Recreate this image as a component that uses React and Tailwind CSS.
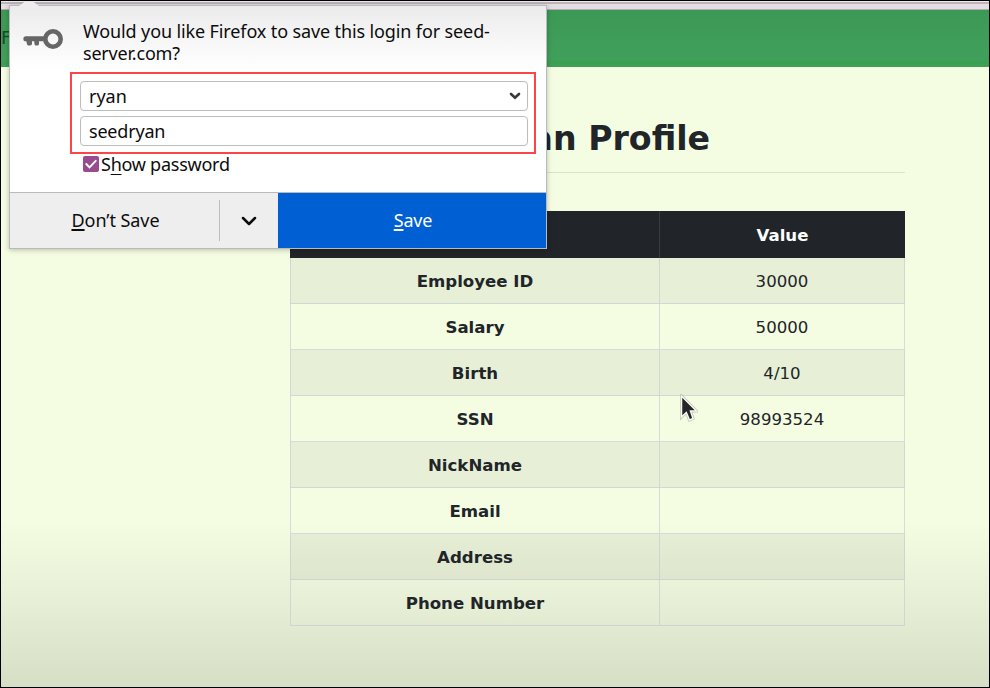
import React from "react";

const rows = [
  ["Employee ID", "30000"],
  ["Salary", "50000"],
  ["Birth", "4/10"],
  ["SSN", "98993524"],
  ["NickName", ""],
  ["Email", ""],
  ["Address", ""],
  ["Phone Number", ""],
];

function ProfileTable() {
  return (
    <div className="grid grid-cols-[370px_245px] text-center text-[16.6px] text-[#212529]">
      <div className="h-[47px] border-r border-[#373b3e] bg-[#212529] font-bold leading-[49px] text-white">Key</div>
      <div className="h-[47px] bg-[#212529] font-bold leading-[49px] text-white">Value</div>
      {rows.map(([key, value], i) => (
        <div key={key} className={"col-span-2 grid h-[46px] grid-cols-[369px_245px] border-b border-l border-[#bcc4d890] leading-[47px] " + (i % 2 ? "" : "bg-black/5")}>
          <div className="h-[45px] border-r border-[#bcc4d890] font-bold">{key}</div>
          <div className="h-[45px] border-r border-[#bcc4d890]">{value}</div>
        </div>
      ))}
    </div>
  );
}

function LoginPopup() {
  return (
    <div className="absolute left-[8px] top-[4px] flex h-[244px] w-[538px] flex-col border border-[#b9bab9] bg-white font-['Noto_Sans',sans-serif] text-[18px] text-[#0c0c0d] shadow-[0_1px_5px_rgba(0,0,0,0.25)]">
      <svg className="absolute left-[6px] top-[-5px]" width="26" height="7" viewBox="0 0 26 7">
        <path d="M0 6.5 3 5 9 .5H17L23 5 26 6.5Z" fill="#ededed" />
      </svg>
      <div className="flex h-[186px] shrink-0 bg-[linear-gradient(#ebebeb_0,#fafafa_46px,#ffffff_65px)]">
        <div className="w-[60px] shrink-0 pl-[13px] pt-[21px]">
          <svg width="41" height="23" viewBox="0 0 41 23">
            <circle cx="30" cy="12" r="7.7" fill="none" stroke="#666" strokeWidth="4.6" />
            <path d="M2.5 9.3H22V14.2H16V16.8Q16 18.6 14.5 18.6H12.5Q11.5 18.6 11.2 14.2H9V16.8Q9 18.6 7.2 18.6H5.2Q4 18.6 3.4 14.2H1.6Q.3 14.2.3 11.8T2.5 9.3Z" fill="#666" />
          </svg>
        </div>
        <div className="flex flex-col">
          <div className="h-[66px] pl-[13px] pt-[14px] leading-[22px]">
            <div className="whitespace-nowrap tracking-[-0.12px]">Would you like Firefox to save this login for seed-</div>
            <div className="tracking-[-0.2px]">server.com?</div>
          </div>
          <div className="flex h-[82px] w-[466px] flex-col gap-[5px] border-2 border-[#fc4548] pl-[8px] pr-[6px] pt-[7px]">
            <div className="flex h-[30px] items-center justify-between rounded-[4px] border border-[#bdbdbd] bg-white pl-[8px] pr-[6px]">
              <span>ryan</span>
              <svg width="12" height="8" viewBox="0 0 12 8" fill="none" stroke="#37383c" strokeWidth="2.6" strokeLinecap="round"><path d="m2 2 4 3.7L10 2" /></svg>
            </div>
            <div className="flex h-[30px] items-center rounded-[4px] border border-[#bdbdbd] bg-white pl-[8px] tracking-[-0.2px]">seedryan</div>
          </div>
          <div className="flex items-center gap-[2px] pl-[13px] leading-[20px] tracking-[-0.25px]">
            <svg width="16" height="16" viewBox="0 0 16 16"><rect width="16" height="16" rx="2" fill="#984b8d" /><path d="m3.3 8 3.2 3.3 6.2-6.5" fill="none" stroke="#fff" strokeWidth="1.9" strokeLinecap="round" /></svg>
            <span>S<span className="underline decoration-1 underline-offset-[3px]">h</span>ow password</span>
          </div>
        </div>
      </div>
      <div className="flex h-[56px] border-t border-[#b9bab9] bg-[#eeeeee] text-center leading-[55px]">
        <div className="w-[209px] pl-[2px] tracking-[-0.05px]"><span className="underline decoration-2 underline-offset-[2px]">D</span>on’t Save</div>
        <div className="my-[7px] flex w-[59px] items-center justify-center border-l border-[#bebebe]">
          <svg width="18" height="12" viewBox="0 0 18 12" fill="none" stroke="#0c0c0d" strokeWidth="2.5" strokeLinecap="round" strokeLinejoin="round"><path d="m3 3 6 6 6-6" /></svg>
        </div>
        <div className="flex-1 bg-[#0060d3] pl-[2px] text-white tracking-[-0.2px]"><span className="underline decoration-2 underline-offset-[2px]">S</span>ave</div>
      </div>
    </div>
  );
}

function Cursor() {
  return (
    <svg className="absolute left-[679px] top-[393px]" width="18" height="28" viewBox="0 0 18 28">
      <path d="M1.5 2V23L6.3 18.5 9.5 26 13 24.5 10.5 17H16.5Z" fill="none" stroke="#8b9085" strokeOpacity=".5" strokeWidth="3" />
      <path d="M1.5 2V23L6.3 18.5 9.5 26 13 24.5 10.5 17H16.5Z" fill="#252525" stroke="#f7f9f2" strokeWidth="1.5" />
    </svg>
  );
}

export default function App() {
  return (
    <div className="relative h-[688px] w-[990px] overflow-hidden border border-black bg-[linear-gradient(#f4fde2_0,#f4fde2_520px,#e6eed5_605px,#d6dec6_686px)] font-['DejaVu_Sans',sans-serif]">
      <div className="h-[9px] border-b border-t border-b-[#b7a9b8] border-t-[#eee9ec] bg-[linear-gradient(#bcb4ba_0,#bcb4ba_2px,#e5dde2_2px)]" />
      <div className="h-[57px] bg-[linear-gradient(#3c9955,#40a05b_50px,#38a04f_52px,#40a05b)] text-[18px] leading-[55px] text-[#184b2b]">F</div>
      <div className="ml-[289px] w-[615px]">
        <h1 className="h-[106px] border-b border-[#dae2cb] pt-[51px] text-center text-[33.2px] font-bold leading-[42px] text-[#212529]">Ryan Profile</h1>
        <div className="pt-[38px]"><ProfileTable /></div>
      </div>
      <LoginPopup />
      <Cursor />
    </div>
  );
}
